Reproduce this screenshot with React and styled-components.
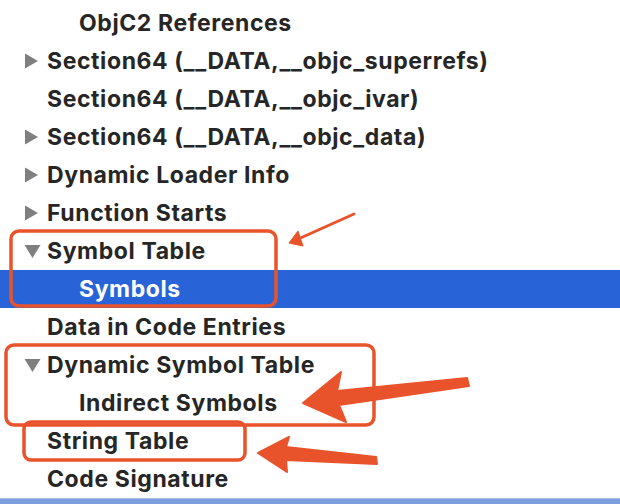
import React from "react";
import styled, { createGlobalStyle } from "styled-components";

const GlobalStyle = createGlobalStyle`
  html, body { margin: 0; padding: 0; background: #ffffff; }
  body { width: 620px; height: 504px; overflow: hidden; }
  #root { height: 100%; }
`;

const rows = [
  { label: "ObjC2 References", depth: 1 },
  { label: "Section64 (__DATA,__objc_superrefs)", depth: 0, arrow: "right" },
  { label: "Section64 (__DATA,__objc_ivar)", depth: 0 },
  { label: "Section64 (__DATA,__objc_data)", depth: 0, arrow: "right" },
  { label: "Dynamic Loader Info", depth: 0, arrow: "right" },
  { label: "Function Starts", depth: 0, arrow: "right" },
  { label: "Symbol Table", depth: 0, arrow: "down" },
  { label: "Symbols", depth: 1, selected: true },
  { label: "Data in Code Entries", depth: 0 },
  { label: "Dynamic Symbol Table", depth: 0, arrow: "down" },
  { label: "Indirect Symbols", depth: 1 },
  { label: "String Table", depth: 0 },
  { label: "Code Signature", depth: 0 },
];

export default function App() {
  return (
    <>
      <GlobalStyle />
      <Page>
        <Tree>
          {rows.map((r) => (
            <Row key={r.label} $selected={r.selected}>
              <Disclosure>
                {r.arrow === "right" && (
                  <svg width="15" height="16" viewBox="0 0 15 16">
                    <polygon points="1,0.5 14,8 1,15.5" fill="#7f7f7f" />
                  </svg>
                )}
                {r.arrow === "down" && (
                  <svg width="17" height="14" viewBox="0 0 17 14">
                    <polygon points="0.5,1 16.5,1 8.5,14" fill="#7f7f7f" />
                  </svg>
                )}
              </Disclosure>
              <Label $depth={r.depth} $selected={r.selected}>
                {r.label}
              </Label>
            </Row>
          ))}
        </Tree>
        <BottomBar />
        <Annotations width="620" height="504" viewBox="0 0 620 504">
          <g fill="none" stroke="#e9532b" strokeWidth="3.5">
            <rect x="11" y="231" width="265" height="75" rx="8" />
            <rect x="6" y="345" width="368" height="80" rx="8" />
            <rect x="24" y="422" width="221" height="38" rx="7" />
          </g>
          <g fill="#e9532b" stroke="#e9532b" strokeLinejoin="round">
            <line x1="354" y1="214" x2="296" y2="240" strokeWidth="3" strokeLinecap="round" />
            <polygon points="289,243 298,231 303,246" strokeWidth="1" />
            <polygon
              points="303,403 341,372 337,391 467,378 469,386 339,405 346,422"
              strokeWidth="2"
            />
            <polygon
              points="258,453 289,437 286,447 376,457 377,464 286,460 287,472"
              strokeWidth="2"
            />
          </g>
        </Annotations>
      </Page>
    </>
  );
}

const Page = styled.div`
  position: relative;
  width: 620px;
  height: 504px;
  display: flex;
  flex-direction: column;
  background: #ffffff;
  overflow: hidden;
  font-family: Inter, "Noto Sans", "Liberation Sans", sans-serif;
`;

const Tree = styled.div`
  padding-top: 4px;
  display: flex;
  flex-direction: column;
`;

const Row = styled.div`
  height: 38px;
  display: flex;
  align-items: center;
  background: ${(p) => (p.$selected ? "#2864d8" : "transparent")};
`;

const Disclosure = styled.div`
  width: 47px;
  padding-left: 24px;
  box-sizing: border-box;
  display: flex;
  align-items: center;
`;

const Label = styled.div`
  margin-left: ${(p) => p.$depth * 32}px;
  font-size: 23px;
  font-weight: 700;
  letter-spacing: 0.6px;
  color: ${(p) => (p.$selected ? "#ffffff" : "#262626")};
  white-space: nowrap;
`;

const BottomBar = styled.div`
  flex: 1;
  background: #7b9fdc;
  border-top: 1px solid #aabfe4;
`;

const Annotations = styled.svg`
  position: absolute;
  left: 0;
  top: 0;
  pointer-events: none;
`;
